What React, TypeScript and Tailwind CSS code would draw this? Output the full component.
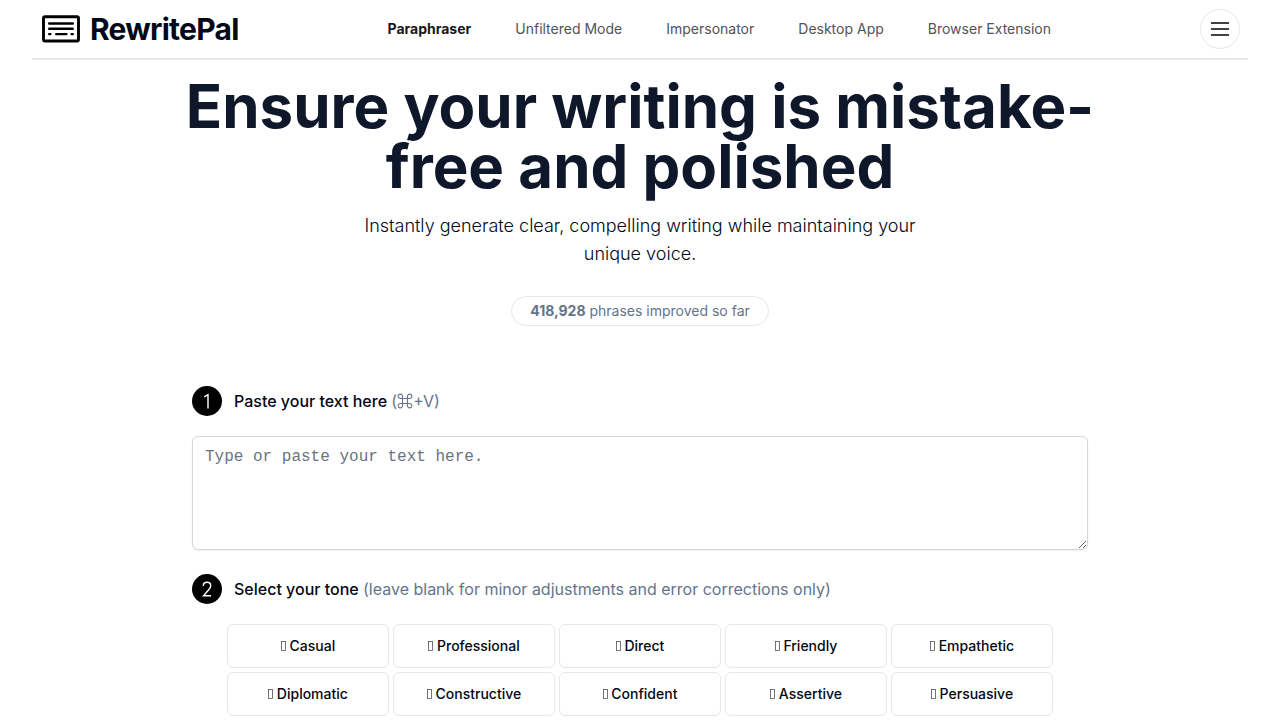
import React from "react";

const navLinks = [
  "Paraphraser",
  "Unfiltered Mode",
  "Impersonator",
  "Desktop App",
  "Browser Extension",
];

const tones = [
  "Casual",
  "Professional",
  "Direct",
  "Friendly",
  "Empathetic",
  "Diplomatic",
  "Constructive",
  "Confident",
  "Assertive",
  "Persuasive",
];

function Logo() {
  return (
    <svg width="38" height="28" viewBox="0 0 38 28" fill="none" stroke="#000" aria-hidden="true">
      <rect x="1.5" y="1.7" width="35" height="24.3" rx="1.5" strokeWidth="2.9" />
      <g strokeWidth="2.4" strokeLinecap="round">
        <path d="M7.2 8.5H30.8" />
        <path d="M7.2 13.7H30.8" />
        <path d="M7.2 19.1H8.4M14.2 19.1H24.4M29.6 19.1H30.8" />
      </g>
    </svg>
  );
}

function StepNumber({ value }: { value: number }) {
  return (
    <svg width="30" height="30" viewBox="0 0 30 30" aria-hidden="true">
      <circle cx="15" cy="15" r="15" fill="#000" />
      {value === 1 ? (
        <path d="M12.2 10.8L16 8.7V22.5" fill="none" stroke="#fff" strokeWidth="1.4" />
      ) : (
        <path
          d="M11.3 12C11.3 9.8 12.8 8.3 15 8.3C17.2 8.3 18.7 9.7 18.7 11.7C18.7 13.2 18 14.3 16.5 16L11.5 21.8H19"
          fill="none"
          stroke="#fff"
          strokeWidth="1.4"
        />
      )}
    </svg>
  );
}

function CommandKey() {
  return (
    <svg
      className="inline-block align-[-2px]"
      width="16"
      height="16"
      viewBox="0 0 16 16"
      fill="none"
      stroke="currentColor"
      strokeWidth="1.1"
      role="img"
      aria-label="Command"
    >
      <path d="M5.5 5.5H10.5V10.5H5.5ZM5.5 5.5H3.5A2.2 2.2 0 1 1 5.5 3.5ZM10.5 5.5V3.5A2.2 2.2 0 1 1 12.5 5.5ZM10.5 10.5H12.5A2.2 2.2 0 1 1 10.5 12.5ZM5.5 10.5V12.5A2.2 2.2 0 1 1 3.5 10.5Z" />
    </svg>
  );
}

function ToneIcon() {
  return (
    <svg className="inline-block align-baseline" width="5" height="10" viewBox="0 0 5 10" aria-hidden="true">
      <rect x="0.5" y="0.5" width="4" height="9" fill="none" stroke="#52525b" strokeWidth="0.8" />
    </svg>
  );
}

export default function App() {
  return (
    <div className="bg-white font-['Inter',sans-serif] text-[#020817]">
      <header className="mx-8 flex h-[60px] items-center justify-between border-b-2 border-gray-200 pr-2 pl-[10px]">
        <a href="#" className="flex items-center gap-[10px]">
          <Logo />
          <span className="text-3xl font-bold tracking-tight">RewritePal</span>
        </a>
        <nav className="flex gap-11 text-sm text-[#52525b]">
          {navLinks.map((label, i) => (
            <a key={label} href="#" className={i === 0 ? "font-bold text-[#18181b]" : ""}>
              {label}
            </a>
          ))}
        </nav>
        <button
          type="button"
          aria-label="Menu"
          className="flex size-10 items-center justify-center rounded-full border border-gray-200"
        >
          <svg width="18" height="14" viewBox="0 0 18 14" stroke="#3f3f46" strokeWidth="2" aria-hidden="true">
            <path d="M0 1H18M0 7H18M0 13H18" />
          </svg>
        </button>
      </header>

      <main>
        <section className="mx-auto flex max-w-5xl flex-col items-center pt-4 text-center">
          <h1 className="text-6xl leading-[60px] font-bold text-[#0f172a]">
            Ensure your writing is mistake-free and polished
          </h1>
          <p className="mt-4 max-w-xl text-lg leading-7 font-light">
            Instantly generate clear, compelling writing while maintaining your unique voice.
          </p>
          <p className="mt-7 rounded-full border border-gray-200 px-[18px] py-1 text-sm text-[#64748b]">
            <strong className="font-bold">418,928</strong> phrases improved so far
          </p>
        </section>

        <form className="mx-auto mt-[60px] max-w-4xl">
          <label htmlFor="source" className="flex items-center gap-3 font-medium">
            <StepNumber value={1} />
            <span>
              Paste your text here{" "}
              <span className="font-normal text-[#64748b]">
                (<CommandKey />
                +V)
              </span>
            </span>
          </label>
          <textarea
            id="source"
            rows={4}
            placeholder="Type or paste your text here."
            className="mt-5 block h-[114px] w-full resize-y rounded-md border border-[#d4d4d8] px-3 py-2 font-['Liberation_Mono',monospace] text-base shadow-xs placeholder:text-[#6b7280]"
          />
          <fieldset className="mt-6">
            <legend className="flex items-center gap-3 font-medium">
              <StepNumber value={2} />
              <span>
                Select your tone{" "}
                <span className="font-normal text-[#64748b]">
                  (leave blank for minor adjustments and error corrections only)
                </span>
              </span>
            </legend>
            <div className="mt-5 grid grid-cols-5 gap-1 px-[35px] pb-1">
              {tones.map((tone) => (
                <button
                  key={tone}
                  type="button"
                  className="h-11 rounded-md border border-gray-200 text-sm font-medium"
                >
                  <ToneIcon /> {tone}
                </button>
              ))}
            </div>
          </fieldset>
        </form>
      </main>
    </div>
  );
}
